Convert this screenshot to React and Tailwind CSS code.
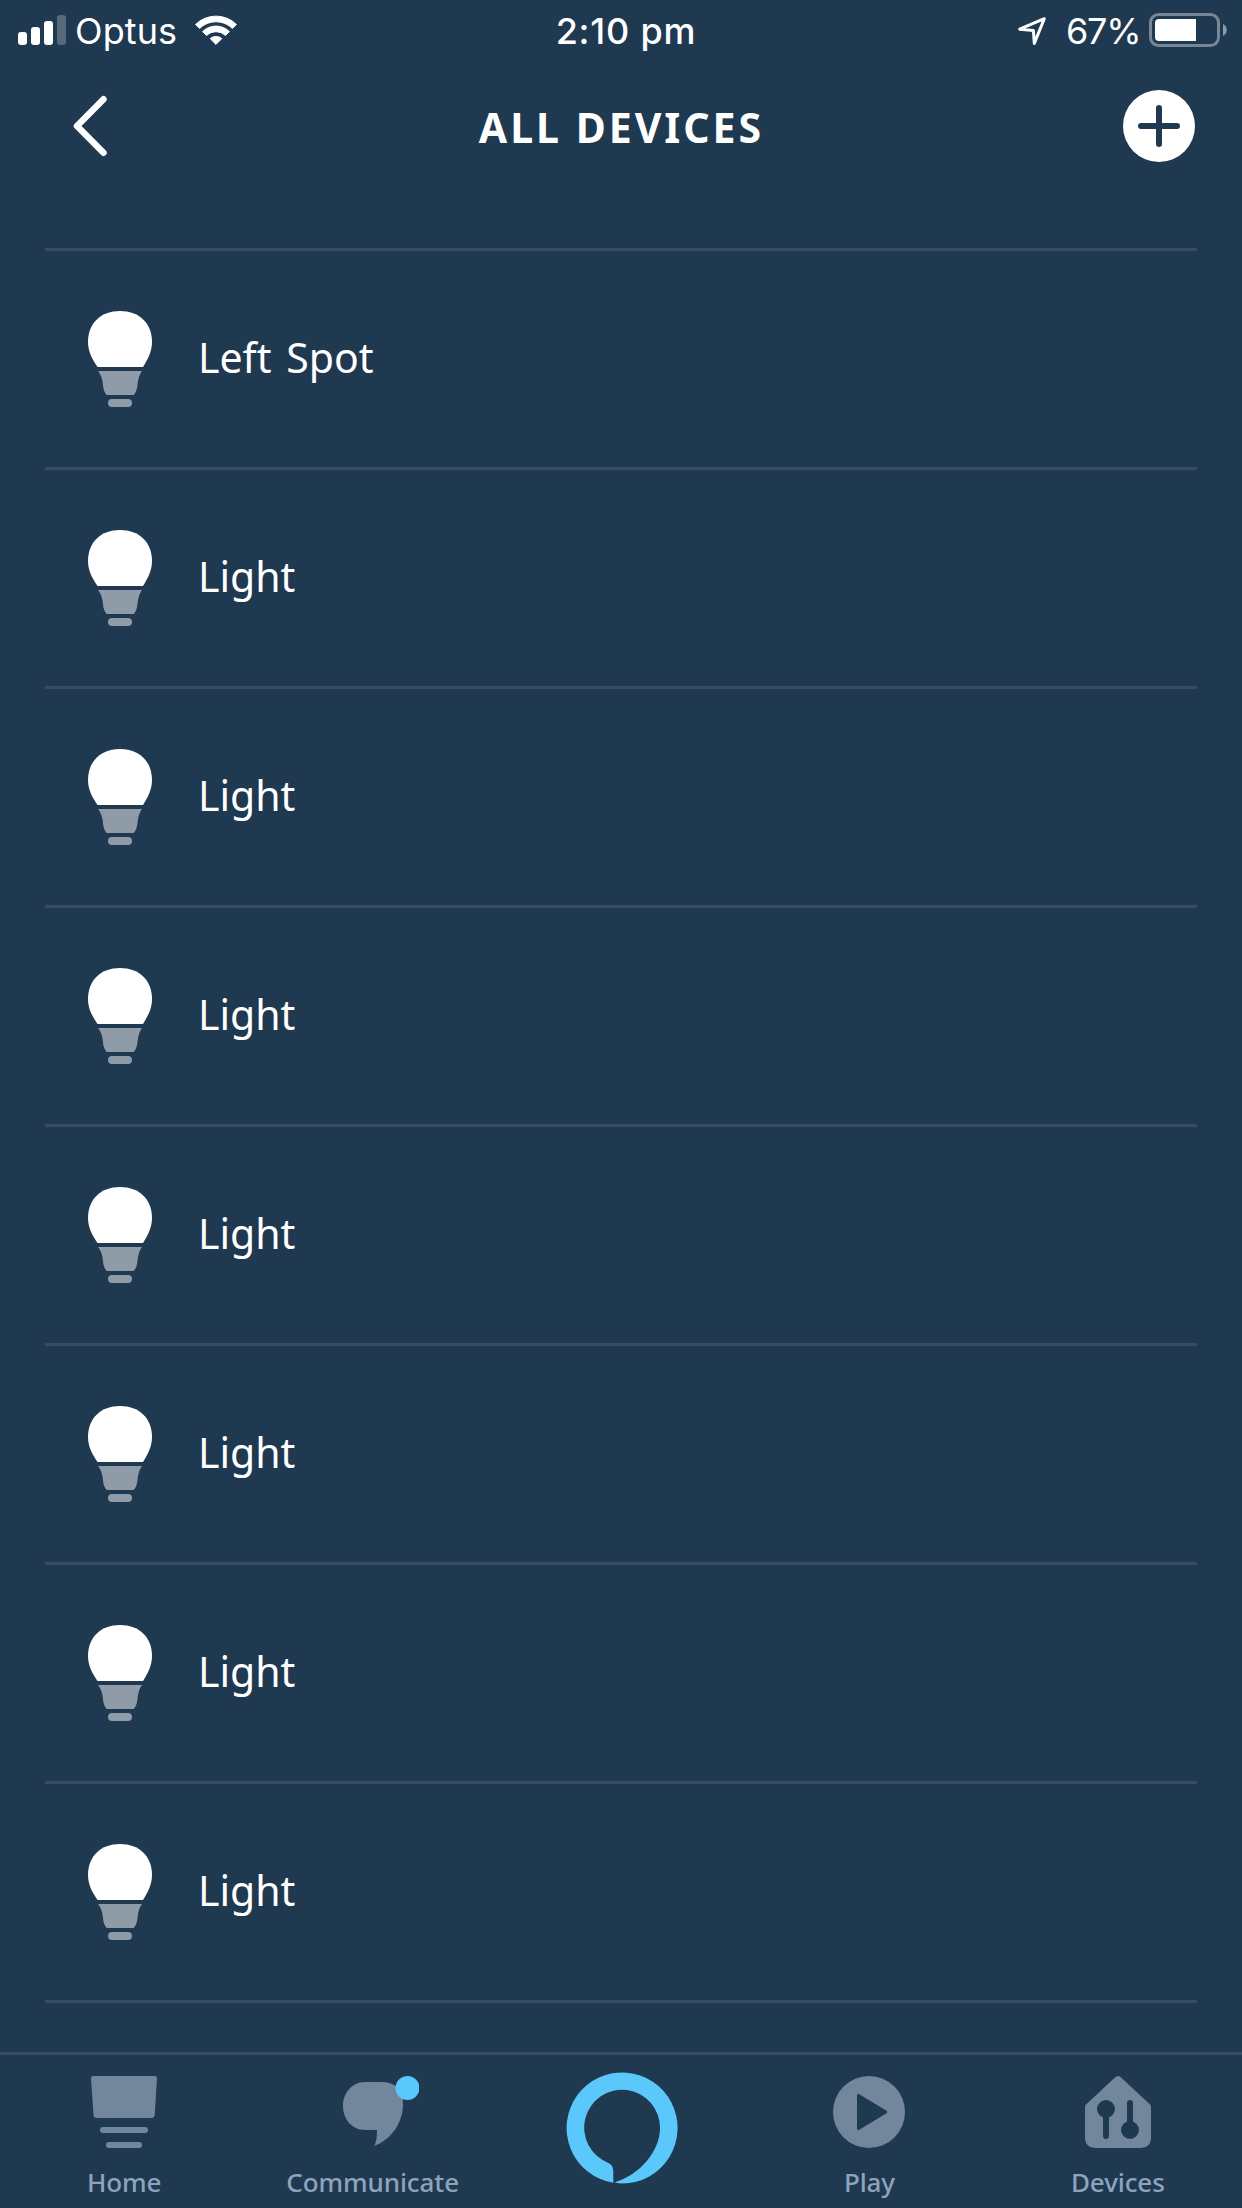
const devices = ['Left Spot', 'Light', 'Light', 'Light', 'Light', 'Light', 'Light', 'Light']

function StatusBar() {
  return (
    <div className="flex h-[60px] items-start justify-between pl-[18px] pr-[15px] font-['Inter',sans-serif] text-[36px] leading-[44px]">
      <div className="flex w-[400px] items-start">
        <svg className="mt-[15px] h-[30px] w-[48px]" viewBox="0 0 48 30" fill="#fff">
          <rect x="0" y="17" width="9" height="13" rx="3" />
          <rect x="13" y="12" width="9" height="18" rx="3" />
          <rect x="26" y="6" width="9" height="24" rx="3" />
          <rect x="39" y="0" width="9" height="30" rx="3" opacity=".25" />
        </svg>
        <span className="ml-[9px] mt-[9px] w-[110px] tracking-[0.1px]">Optus</span>
        <svg className="ml-[10px] mt-[15px] h-[30px] w-[42px]" viewBox="0 0 42 30" fill="#fff" stroke="#fff" strokeWidth="1" strokeLinejoin="round">
          <path d="M.6 9.4a29.3 29.3 0 0 1 40.8 0l-4 4a23.4 23.4 0 0 0-32.8 0z" />
          <path d="M7.6 16.6a19 19 0 0 1 26.8 0l-4 3.8a13.6 13.6 0 0 0-18.8 0z" />
          <path d="M15.2 23.6a9 9 0 0 1 11.6 0L21 29.4z" />
        </svg>
      </div>
      <span className="ml-[7px] mt-[9px] font-medium tracking-[0.8px] whitespace-nowrap">2:10 pm</span>
      <div className="flex w-[400px] items-start justify-end">
        <svg className="mt-[16px] h-[30px] w-[30px]" viewBox="0 0 30 30" fill="none" stroke="#fff" strokeWidth="3" strokeLinejoin="round">
          <path d="M27.3 2.7 2.7 13.2 16.4 14.4 17.3 27.4z" />
        </svg>
        <span className="ml-[19px] mt-[9px] w-[75px] tracking-[-1.2px]">67%</span>
        <svg className="ml-[8px] mt-[13px] h-[34px] w-[78px]" viewBox="0 0 78 34">
          <rect x="1.5" y="1.5" width="68" height="31" rx="8" fill="none" stroke="#788798" strokeWidth="3" />
          <path d="M10 6h37v22H10a4 4 0 0 1-4-4V10a4 4 0 0 1 4-4z" fill="#fff" />
          <path d="M74 11c5 2.5 5 9.5 0 12z" fill="#8f9ba8" />
        </svg>
      </div>
    </div>
  )
}

function Header() {
  return (
    <header className="flex h-[132px] items-center justify-between pl-[72px] pr-[47px]">
      <svg className="h-[62px] w-[48px]" viewBox="0 0 48 62" fill="none" stroke="#fff" strokeWidth="6.5" strokeLinecap="round" strokeLinejoin="round">
        <path d="M31.5 4.3 5 31l26.5 26.7" />
      </svg>
      <h1 className="mt-[2px] text-[41px] font-bold leading-[54px] tracking-[3px]">ALL DEVICES</h1>
      <svg className="h-[72px] w-[72px]" viewBox="0 0 72 72">
        <circle cx="36" cy="36" r="36" fill="#fff" />
        <path d="M36 18v36M18 36h36" stroke="#1f3951" strokeWidth="6" strokeLinecap="round" />
      </svg>
    </header>
  )
}

function Bulb() {
  return (
    <svg className="h-[96px] w-[64px]" viewBox="0 0 64 96">
      <path d="M32 0C51 0 64 12 64 31C64 41 59.5 48.5 55 56H9.5C4.5 48.5 0 41 0 31C0 12 13 0 32 0z" fill="#fff" />
      <path d="M10 60H54C50.5 65 50 70 49.5 74C49 78.5 48 81.5 45.7 84H18.7C16.5 81.5 15.2 78.5 15 74C14.7 70 13.8 65 10 60z" fill="#8f9ca8" />
      <rect x="20" y="88" width="24" height="8" rx="4" fill="#8f9ca8" />
    </svg>
  )
}

function DeviceRow({ name }) {
  return (
    <li className="flex h-[219px] items-center border-b-3 border-[#374d62] pl-[43px]">
      <Bulb />
      <span className="mb-[5px] ml-[46px] text-[41px] leading-[56px] [word-spacing:4px]">{name}</span>
    </li>
  )
}

function Tab({ label, children }) {
  return (
    <div className="flex flex-1 flex-col items-center pt-[21px]">
      {children}
      {label && (
        <span className="mt-[16px] text-[26px] font-medium leading-[36px] tracking-[-0.1px] text-[#8ea4bd]">{label}</span>
      )}
    </div>
  )
}

function TabBar() {
  return (
    <nav className="flex h-[156px] shrink-0 border-t-3 border-[#374d62]">
      <Tab label="Home">
        <svg className="h-[72px] w-[66px] shrink-0" viewBox="0 0 66 72" fill="#72879b">
          <path d="M2 0h62q2 0 2 2l-2.3 37q-.2 3-3 3H5.5q-2.8 0-3-3L0 2Q0 0 2 0z" />
          <rect x="9" y="51" width="48" height="6" rx="3" />
          <rect x="15" y="66" width="36" height="6" rx="3" />
        </svg>
      </Tab>
      <Tab label="Communicate">
        <svg className="h-[72px] w-[93px] shrink-0" viewBox="0 0 93 72">
          <path d="M39 6H55Q77 6 77 28C77 47 65 64 48 70Q51 66 51 54H39C26 54 17 43 17 30S26 6 39 6z" fill="#72879b" />
          <circle cx="81.5" cy="12" r="12" fill="#5ac8fa" />
        </svg>
      </Tab>
      <Tab>
        <svg className="-mt-[5px] h-[114px] w-[116px] shrink-0" viewBox="563 2071 116 114">
          <path
            d="M613.3 2182.8A55.5 55.5 0 1 1 622.2 2183.5Q618 2183.5 614.5 2182.3C640 2175 660 2151 660 2128A37.9 37.9 0 1 0 608.5 2163Q613.3 2165.5 613.3 2171z"
            fill="#5ac8fa"
          />
        </svg>
      </Tab>
      <Tab label="Play">
        <svg className="h-[72px] w-[72px] shrink-0" viewBox="0 0 72 72">
          <circle cx="36" cy="36" r="36" fill="#72879b" />
          <path d="M25.5 19.5v33L52.8 36z" fill="#1f3951" stroke="#1f3951" strokeWidth="3" strokeLinejoin="round" />
        </svg>
      </Tab>
      <Tab label="Devices">
        <svg className="h-[72px] w-[66px] shrink-0" viewBox="0 0 66 72">
          <path d="M30.5 1Q33 -1 35.5 1L65 28.5Q66 29.5 66 31V61Q66 72 55 72H11Q0 72 0 61V31Q0 29.5 1 28.5z" fill="#72879b" />
          <g fill="#1f3951" stroke="#1f3951" strokeWidth="6" strokeLinecap="round">
            <circle cx="21" cy="33" r="6" />
            <path d="M21 33v27M45 54V27" />
            <circle cx="45" cy="54" r="6" />
          </g>
        </svg>
      </Tab>
    </nav>
  )
}

export default function App() {
  return (
    <div className="flex h-[2208px] w-[1242px] flex-col overflow-hidden bg-[#1f3951] font-['Noto_Sans',sans-serif] text-white">
      <StatusBar />
      <Header />
      <ul className="mx-[45px] mt-[56px] h-[1804px] shrink-0 border-t-3 border-[#374d62]">
        {devices.map((name, i) => (
          <DeviceRow key={i} name={name} />
        ))}
      </ul>
      <TabBar />
    </div>
  )
}
